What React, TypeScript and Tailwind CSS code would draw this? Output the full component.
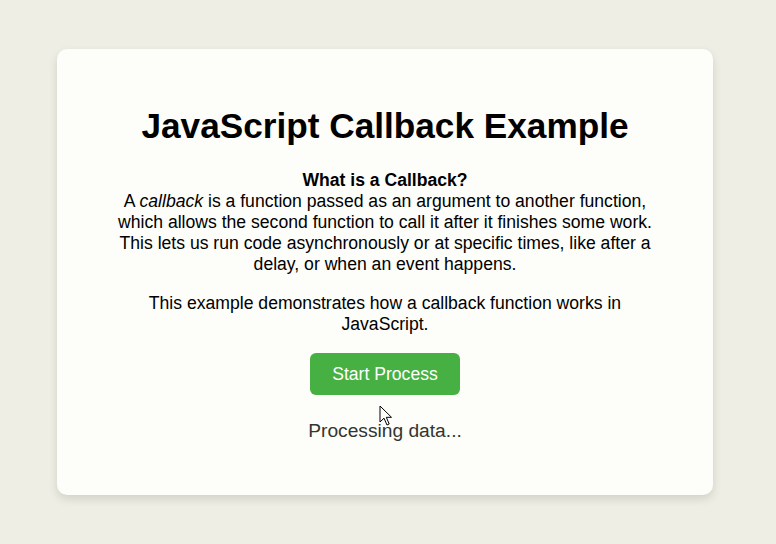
import React from "react";

const Cursor = () => (
  <svg
    className="absolute left-[379px] top-[405px]"
    width="14"
    height="22"
    viewBox="0 0 14 22"
  >
    <path
      d="M1 1 L1 17 L5 13.2 L8 20 L10.2 19 L7.3 12.3 L12.5 12.3 Z"
      fill="#fff"
      stroke="#000"
      strokeWidth="1"
      strokeLinejoin="round"
    />
  </svg>
);

const App: React.FC = () => {
  return (
    <div
      className="relative min-h-[544px] w-full bg-[#eeeee4] pl-[57px] pt-[49px]"
      style={{ fontFamily: '"Liberation Sans", Arial, sans-serif' }}
    >
      <div className="w-[656px] rounded-[10px] bg-[#fdfdf9] px-[50px] pt-[57px] pb-[53px] text-center shadow-[0_4px_10px_rgba(0,0,0,0.12)]">
        <h1 className="text-[35.2px] font-bold leading-[39px] text-black">
          JavaScript Callback Example
        </h1>
        <p className="mt-[25px] text-[17.6px] leading-[21px] text-black">
          <strong>What is a Callback?</strong>
          <br />A <em>callback</em> is a function passed as an argument to another function,
          which allows the second function to call it after it finishes some work. This lets
          us run code asynchronously or at specific times, like after a delay, or when an
          event happens.
        </p>
        <p className="mt-[18px] text-[17.6px] leading-[21px] text-black">
          This example demonstrates how a callback function works in JavaScript.
        </p>
        <button className="mt-[18px] h-[42px] w-[150px] rounded-[6px] bg-[#47b042] text-[17.6px] text-white">
          Start Process
        </button>
        <p className="mt-[24px] text-[19.2px] leading-[23px] text-[#33352f]">
          Processing data...
        </p>
      </div>
      <Cursor />
    </div>
  );
};

export default App;
